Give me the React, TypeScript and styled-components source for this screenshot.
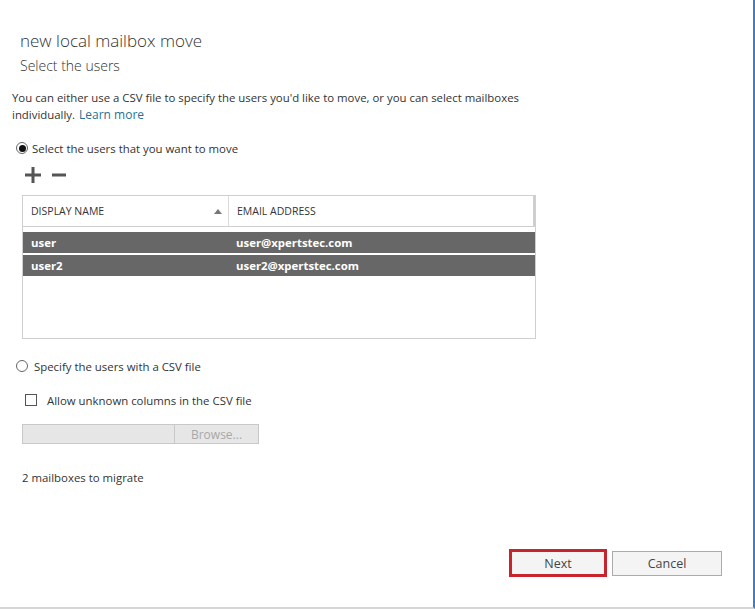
import React from 'react'
import styled, { createGlobalStyle } from 'styled-components'

const GlobalStyle = createGlobalStyle`
  html, body {
    margin: 0;
    padding: 0;
    background: #ffffff;
  }
  body {
    font-family: 'Open Sans', 'Segoe UI', sans-serif;
    color: #333333;
  }
`

const users = [
  { name: 'user', email: 'user@xpertstec.com' },
  { name: 'user2', email: 'user2@xpertstec.com' },
]

const App = () => {
  return (
    <React.Fragment>
      <GlobalStyle />
      <Dialog>
        <Header>
          <Title>new local mailbox move</Title>
          <SubTitle>Select the users</SubTitle>
        </Header>
        <Body>
          <Intro>
            You can either use a CSV file to specify the users you'd like to move, or you can select mailboxes
            individually.
            <LearnMore href='#'>Learn more</LearnMore>
          </Intro>

          <RadioRow $top={18} $gap={4}>
            <Radio $checked />
            <span>Select the users that you want to move</span>
          </RadioRow>

          <Toolbar>
            <svg width='16' height='16' viewBox='0 0 16 16'>
              <rect x='0' y='6.5' width='16' height='3' fill='#555' />
              <rect x='6.5' y='0' width='3' height='16' fill='#555' />
            </svg>
            <svg width='14' height='16' viewBox='0 0 14 16'>
              <rect x='0' y='6.5' width='14' height='3' fill='#555' />
            </svg>
          </Toolbar>

          <Table>
            <HeadRow>
              <HeadCell $width={206}>
                DISPLAY NAME
                <SortArrow />
              </HeadCell>
              <HeadCell>EMAIL ADDRESS</HeadCell>
            </HeadRow>
            <Rows>
              {users.map((u) => (
                <Row key={u.name}>
                  <Cell $width={205}>{u.name}</Cell>
                  <Cell>{u.email}</Cell>
                </Row>
              ))}
            </Rows>
          </Table>

          <RadioRow $top={20} $gap={6}>
            <Radio />
            <span>Specify the users with a CSV file</span>
          </RadioRow>

          <CheckRow>
            <CheckBox />
            <span>Allow unknown columns in the CSV file</span>
          </CheckRow>

          <FilePicker>
            <FileInput />
            <BrowseButton>Browse...</BrowseButton>
          </FilePicker>

          <Count>2 mailboxes to migrate</Count>
        </Body>
        <Footer>
          <Button $focused>Next</Button>
          <Button>Cancel</Button>
        </Footer>
      </Dialog>
    </React.Fragment>
  )
}

export default App

const Dialog = styled.div`
  width: 753px;
  height: 607px;
  border-right: 2px solid #3b7fc4;
  border-bottom: 2px solid #d6d6d6;
  display: flex;
  flex-direction: column;
  background: #fff;
`

const Header = styled.div`
  padding: 29px 0 0 20px;
`

const Title = styled.h1`
  margin: 0;
  font-family: 'Open Sans', sans-serif;
  font-weight: 300;
  font-size: 17px;
  line-height: 24px;
  color: #333;
`

const SubTitle = styled.h2`
  margin: 3px 0 0;
  font-weight: 300;
  font-size: 14px;
  line-height: 20px;
  color: #333;
`

const Body = styled.div`
  padding: 13px 0 0 12px;
  flex: 1;
  display: flex;
  flex-direction: column;
  font-size: 11.4px;
`

const Intro = styled.p`
  margin: 0;
  width: 530px;
  line-height: 17px;
  color: #333;
`

const LearnMore = styled.a`
  margin-left: 4px;
  color: #1f7393;
  text-decoration: none;
  font-size: 12px;
`

const RadioRow = styled.label<{ $top: number; $gap: number }>`
  display: flex;
  align-items: center;
  gap: ${(p) => p.$gap}px;
  margin-top: ${(p) => p.$top}px;
  margin-left: 4px;
  height: 14px;
  color: #333;
`

const Radio = styled.span<{ $checked?: boolean }>`
  width: 12px;
  height: 12px;
  border: 1px solid #666;
  border-radius: 50%;
  box-sizing: border-box;
  flex: none;
  display: flex;
  align-items: center;
  justify-content: center;
  &::after {
    content: '';
    display: ${(p) => (p.$checked ? 'block' : 'none')};
    width: 7px;
    height: 7px;
    border-radius: 50%;
    background: #111;
  }
`

const Toolbar = styled.div`
  display: flex;
  align-items: center;
  gap: 11px;
  margin: 12px 0 0 13px;
  height: 16px;
`

const Table = styled.div`
  margin: 12px 0 0 10px;
  width: 514px;
  height: 144px;
  box-sizing: border-box;
  border: 1px solid #cfcfcf;
  display: flex;
  flex-direction: column;
`

const HeadRow = styled.div`
  display: flex;
  height: 30px;
  border-bottom: 1px solid #cfcfcf;
  border-right: 2px solid #cfcfcf;
  font-size: 10.5px;
  color: #333;
`

const HeadCell = styled.div<{ $width?: number }>`
  position: relative;
  display: flex;
  align-items: center;
  padding-left: 8px;
  box-sizing: border-box;
  ${(p) => (p.$width ? `width: ${p.$width}px; border-right: 1px solid #dcdcdc;` : 'flex: 1;')}
`

const SortArrow = styled.span`
  position: absolute;
  right: 6px;
  top: 13px;
  width: 0;
  height: 0;
  border-left: 4px solid transparent;
  border-right: 4px solid transparent;
  border-bottom: 5px solid #777;
`

const Rows = styled.div`
  padding-top: 5px;
  display: flex;
  flex-direction: column;
  gap: 2px;
`

const Row = styled.div`
  display: flex;
  height: 21px;
  align-items: center;
  background: #676767;
  color: #fff;
  font-weight: 700;
  font-size: 11.4px;
`

const Cell = styled.div<{ $width?: number }>`
  padding-left: 8px;
  box-sizing: border-box;
  ${(p) => (p.$width ? `width: ${p.$width}px;` : 'flex: 1;')}
`

const CheckRow = styled.label`
  display: flex;
  align-items: center;
  gap: 10px;
  margin: 20px 0 0 13px;
  height: 14px;
`

const CheckBox = styled.span`
  width: 12px;
  height: 12px;
  box-sizing: border-box;
  border: 1px solid #555;
  background: #fff;
`

const FilePicker = styled.div`
  display: flex;
  margin: 17px 0 0 10px;
  height: 20px;
`

const FileInput = styled.div`
  width: 153px;
  box-sizing: border-box;
  background: #e6e6e6;
  border: 1px solid #c8c8c8;
`

const BrowseButton = styled.div`
  width: 84px;
  box-sizing: border-box;
  background: #e6e6e6;
  border: 1px solid #c8c8c8;
  border-left: none;
  color: #a8a8a8;
  font-size: 12px;
  display: flex;
  align-items: center;
  justify-content: center;
`

const Count = styled.div`
  margin: 26px 0 0 10px;
  color: #333;
`

const Footer = styled.div`
  display: flex;
  justify-content: flex-end;
  align-items: center;
  gap: 5px;
  padding: 0 31px 30px 0;
`

const Button = styled.button<{ $focused?: boolean }>`
  font-family: 'Open Sans', sans-serif;
  font-size: 12.5px;
  color: #444;
  background: #f4f4f4;
  box-sizing: border-box;
  cursor: pointer;
  ${(p) =>
    p.$focused
      ? 'width: 98px; height: 28px; border: 3px solid #c9232e;'
      : 'width: 110px; height: 25px; border: 1px solid #ababab;'}
`
